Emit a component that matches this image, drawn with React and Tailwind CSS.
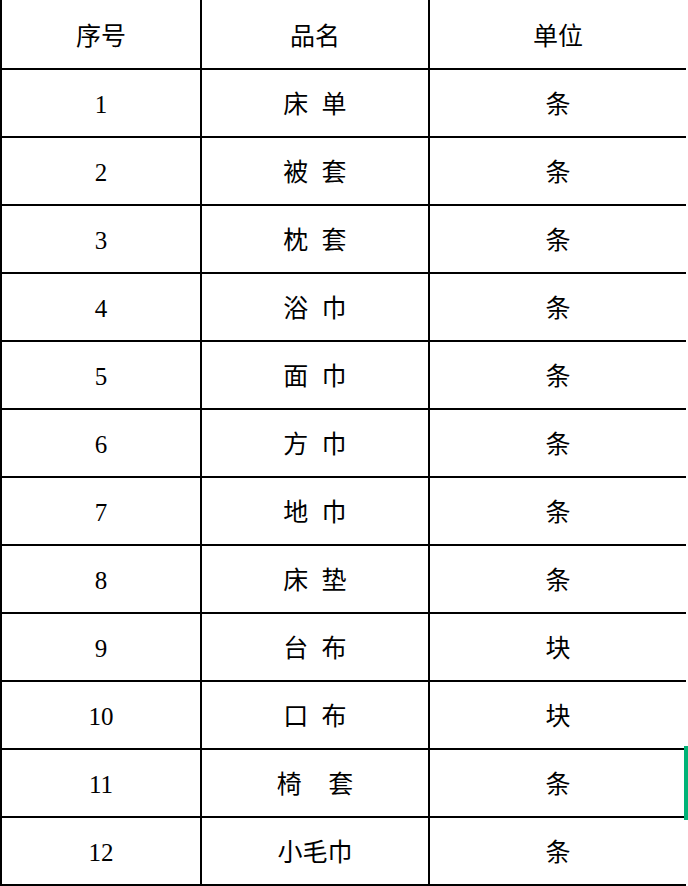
const rows = [
    { no: "1", name: "床 单", unit: "条" },
    { no: "2", name: "被 套", unit: "条" },
    { no: "3", name: "枕 套", unit: "条" },
    { no: "4", name: "浴 巾", unit: "条" },
    { no: "5", name: "面 巾", unit: "条" },
    { no: "6", name: "方 巾", unit: "条" },
    { no: "7", name: "地 巾", unit: "条" },
    { no: "8", name: "床 垫", unit: "条" },
    { no: "9", name: "台 布", unit: "块" },
    { no: "10", name: "口 布", unit: "块" },
    { no: "11", name: "椅  套", unit: "条" },
    { no: "12", name: "小毛巾", unit: "条" },
];

function Row({ no, name, unit, header, last }) {
    const pad = header ? "pt-[5px]" : "pt-[2px]";
    return (
        <div
            className={`flex h-[68px] border-black ${header ? "" : "border-t-2"} ${last ? "h-[70px] border-b-2" : ""}`}
        >
            <div className={`w-[200px] border-r-2 border-black flex items-center justify-center ${pad}`}>
                {no}
            </div>
            <div className={`w-[228px] border-r-2 border-black flex items-center justify-center whitespace-pre [word-spacing:7px] ${pad}`}>
                {name}
            </div>
            <div className={`w-[256px] flex items-center justify-center ${pad}`}>
                {unit}
            </div>
        </div>
    );
}

export default function App() {
    return (
        <div className="relative w-[688px] h-[886px] bg-white overflow-hidden">
            <div className="w-[686px] border-l-2 border-black text-[25px] leading-none text-black font-['Liberation_Serif','Noto_Sans_CJK_SC',serif]">
                <Row header no="序号" name="品名" unit="单位" />
                {rows.map((r, i) => (
                    <Row key={r.no} {...r} last={i === rows.length - 1} />
                ))}
            </div>
            <div className="absolute right-0 top-[746px] w-[4px] h-[74px] bg-[#00b377]" />
        </div>
    );
}
